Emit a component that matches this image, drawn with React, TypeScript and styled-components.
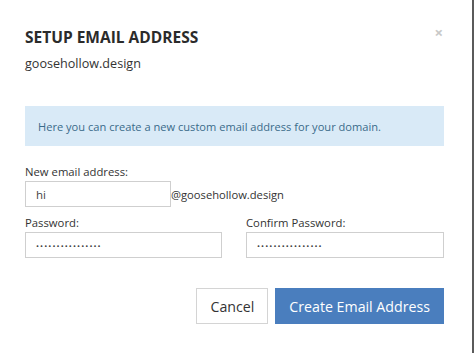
import styled, { createGlobalStyle } from "styled-components";

const GlobalStyle = createGlobalStyle`
  html, body {
    margin: 0;
    padding: 0;
    background: #5b5b5b;
  }
  body {
    font-family: "Open Sans", "Liberation Sans", sans-serif;
    color: #333;
  }
`;

const Modal = styled.div`
  width: 472px;
  height: 353px;
  background: #fff;
  box-sizing: border-box;
  padding: 25px 28px 0 25px;
  position: relative;
`;

const CloseButton = styled.button`
  position: absolute;
  top: 22px;
  right: 29px;
  border: none;
  background: none;
  padding: 0;
  font-family: "Open Sans", sans-serif;
  font-size: 15px;
  font-weight: 700;
  color: #c8c8c8;
  cursor: pointer;
`;

const Title = styled.h2`
  margin: 0;
  font-size: 15.5px;
  line-height: 24px;
  font-weight: 700;
  color: #2b2b2b;
`;

const Subtitle = styled.div`
  margin-top: 6px;
  font-size: 12.6px;
  line-height: 18px;
  color: #333;
`;

const InfoBox = styled.div`
  margin-top: 33px;
  height: 40px;
  background: #d9eaf7;
  display: flex;
  align-items: center;
  padding: 0 13px;
  font-size: 11.1px;
  color: #3a6a8a;
`;

const Form = styled.div`
  margin-top: 17px;
  display: flex;
  flex-direction: column;
  gap: 7px;
`;

const Field = styled.div`
  display: flex;
  flex-direction: column;
  gap: 1px;
`;

const Row = styled.div`
  display: grid;
  grid-template-columns: 197px 198px;
  justify-content: space-between;
`;

const Label = styled.label`
  font-size: 11.3px;
  line-height: 17px;
  color: #333;
`;

const InputLine = styled.div`
  display: flex;
  align-items: center;
`;

const Input = styled.input<{ $width?: number }>`
  box-sizing: border-box;
  width: ${(p) => (p.$width ? `${p.$width}px` : "100%")};
  height: 26px;
  border: 1px solid #cfcfcf;
  padding: 0 10px;
  font-family: "Open Sans", sans-serif;
  font-size: 11.5px;
  color: #444;
  outline: none;
  &[type="password"] {
    font-size: 8px;
    letter-spacing: 1.1px;
  }
`;

const Suffix = styled.span`
  font-size: 11.2px;
  color: #333;
`;

const Actions = styled.div`
  margin-top: 30px;
  display: flex;
  justify-content: flex-end;
  gap: 7px;
`;

const Button = styled.button<{ $primary?: boolean }>`
  height: 36px;
  padding: 0 13px;
  font-family: "Open Sans", sans-serif;
  font-size: 14.2px;
  border: 1px solid ${(p) => (p.$primary ? "#4a7ebe" : "#d4d4d4")};
  background: ${(p) => (p.$primary ? "#4a7ebe" : "#fff")};
  color: ${(p) => (p.$primary ? "#fff" : "#333")};
  cursor: pointer;
`;

export default function App() {
  return (
    <>
      <GlobalStyle />
      <Modal>
        <CloseButton aria-label="Close">×</CloseButton>
        <Title>SETUP EMAIL ADDRESS</Title>
        <Subtitle>goosehollow.design</Subtitle>
        <InfoBox>Here you can create a new custom email address for your domain.</InfoBox>
        <Form>
          <Field>
            <Label>New email address:</Label>
            <InputLine>
              <Input $width={146} defaultValue="hi" />
              <Suffix>@goosehollow.design</Suffix>
            </InputLine>
          </Field>
          <Row>
            <Field>
              <Label>Password:</Label>
              <Input type="password" defaultValue="abcdefghijklmnop" />
            </Field>
            <Field>
              <Label>Confirm Password:</Label>
              <Input type="password" defaultValue="abcdefghijklmnop" />
            </Field>
          </Row>
        </Form>
        <Actions>
          <Button>Cancel</Button>
          <Button $primary>Create Email Address</Button>
        </Actions>
      </Modal>
    </>
  );
}
